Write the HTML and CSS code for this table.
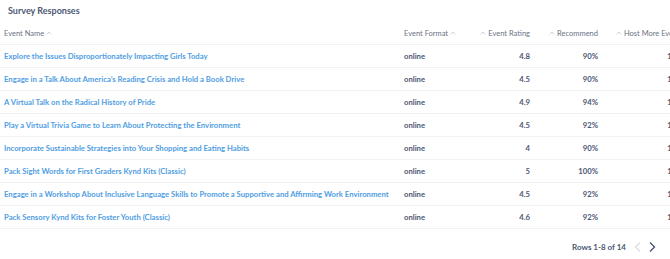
FILE: index.html
```html
<!DOCTYPE html>
<html>
<head>
<meta charset="utf-8">
<link rel="stylesheet" href="styles.css">
</head>
<body>
<div class="card">
  <div class="title">Survey Responses</div>
  <table class="grid">
    <colgroup>
      <col class="c1"><col class="c2"><col class="c3"><col class="c4"><col class="c5">
    </colgroup>
    <thead>
      <tr>
        <th class="left">Event Name <svg class="sort" width="6" height="4" viewBox="0 0 6 4"><path d="M0.8 3.4 L3 1 L5.2 3.4" fill="none" stroke="currentColor" stroke-width="0.8"/></svg></th>
        <th class="left">Event Format <svg class="sort" width="6" height="4" viewBox="0 0 6 4"><path d="M0.8 3.4 L3 1 L5.2 3.4" fill="none" stroke="currentColor" stroke-width="0.8"/></svg></th>
        <th class="right"><svg class="sort" width="6" height="4" viewBox="0 0 6 4"><path d="M0.8 3.4 L3 1 L5.2 3.4" fill="none" stroke="currentColor" stroke-width="0.8"/></svg> Event Rating</th>
        <th class="right"><svg class="sort" width="6" height="4" viewBox="0 0 6 4"><path d="M0.8 3.4 L3 1 L5.2 3.4" fill="none" stroke="currentColor" stroke-width="0.8"/></svg> Recommend</th>
        <th class="left host"><svg class="sort" width="6" height="4" viewBox="0 0 6 4"><path d="M0.8 3.4 L3 1 L5.2 3.4" fill="none" stroke="currentColor" stroke-width="0.8"/></svg> Host More Events</th>
      </tr>
    </thead>
    <tbody>
      <tr><td class="link">Explore the Issues Disproportionately Impacting Girls Today</td><td>online</td><td class="right">4.8</td><td class="right">90%</td><td class="right">100%</td></tr>
      <tr><td class="link">Engage in a Talk About America’s Reading Crisis and Hold a Book Drive</td><td>online</td><td class="right">4.5</td><td class="right">90%</td><td class="right">100%</td></tr>
      <tr><td class="link">A Virtual Talk on the Radical History of Pride</td><td>online</td><td class="right">4.9</td><td class="right">94%</td><td class="right">100%</td></tr>
      <tr><td class="link">Play a Virtual Trivia Game to Learn About Protecting the Environment</td><td>online</td><td class="right">4.5</td><td class="right">92%</td><td class="right">100%</td></tr>
      <tr><td class="link">Incorporate Sustainable Strategies into Your Shopping and Eating Habits</td><td>online</td><td class="right">4</td><td class="right">90%</td><td class="right">100%</td></tr>
      <tr><td class="link">Pack Sight Words for First Graders Kynd Kits (Classic)</td><td>online</td><td class="right">5</td><td class="right">100%</td><td class="right">100%</td></tr>
      <tr><td class="link">Engage in a Workshop About Inclusive Language Skills to Promote a Supportive and Affirming Work Environment</td><td>online</td><td class="right">4.5</td><td class="right">92%</td><td class="right">100%</td></tr>
      <tr><td class="link">Pack Sensory Kynd Kits for Foster Youth (Classic)</td><td>online</td><td class="right">4.6</td><td class="right">92%</td><td class="right">100%</td></tr>
    </tbody>
  </table>
  <div class="footer">
    <span class="rows">Rows 1-8 of 14</span>
    <svg class="chev prev" width="10" height="12" viewBox="0 0 10 12"><path d="M7 1.5 L2.5 6 L7 10.5" fill="none" stroke="currentColor" stroke-width="1.4"/></svg>
    <svg class="chev next" width="10" height="12" viewBox="0 0 10 12"><path d="M3 1.5 L7.5 6 L3 10.5" fill="none" stroke="currentColor" stroke-width="1.4"/></svg>
  </div>
</div>
</body>
</html>
```
FILE: styles.css
```css
html, body {
  margin: 0;
  padding: 0;
  background: #fff;
  overflow: hidden;
}
body {
  width: 670px;
  height: 259px;
  font-family: Lato, "Liberation Sans", sans-serif;
  color: #4c5773;
}
.card {
  width: 670px;
  overflow: hidden;
}
.title {
  font-size: 9px;
  font-weight: 700;
  color: #4c5773;
  padding: 5px 0 0 8px;
  height: 18px;
  line-height: 12px;
}
.grid {
  border-collapse: collapse;
  table-layout: fixed;
  width: 691px;
  font-size: 7.7px;
}
.c1 { width: 400px; }
.c2 { width: 70px; }
.c3 { width: 64px; }
.c4 { width: 68px; }
.c5 { width: 89px; }
th, td {
  white-space: nowrap;
  overflow: hidden;
  padding: 0 4px;
  height: 22px;
  border-bottom: 1px solid #f2f2f4;
}
th {
  font-weight: 400;
  font-size: 7.5px;
  color: #6b7285;
  text-align: left;
  height: 21px;
}
td {
  font-weight: 700;
  color: #4c5773;
}
.left { text-align: left; }
.right { text-align: right; }
.host { text-align: left; padding-left: 14px; }
td.link { color: #509ee3; }
.sort {
  color: #c3c7d0;
  vertical-align: 1px;
}
.footer {
  display: flex;
  align-items: center;
  justify-content: flex-end;
  gap: 4px;
  height: 26px;
  padding: 5px 13px 0 0;
}
.rows {
  font-size: 8px;
  font-weight: 700;
  color: #4c5773;
  margin-right: 3px;
}
.chev { display: block; }
.prev { color: #dcdfe5; }
.next { color: #4c5773; }
```
